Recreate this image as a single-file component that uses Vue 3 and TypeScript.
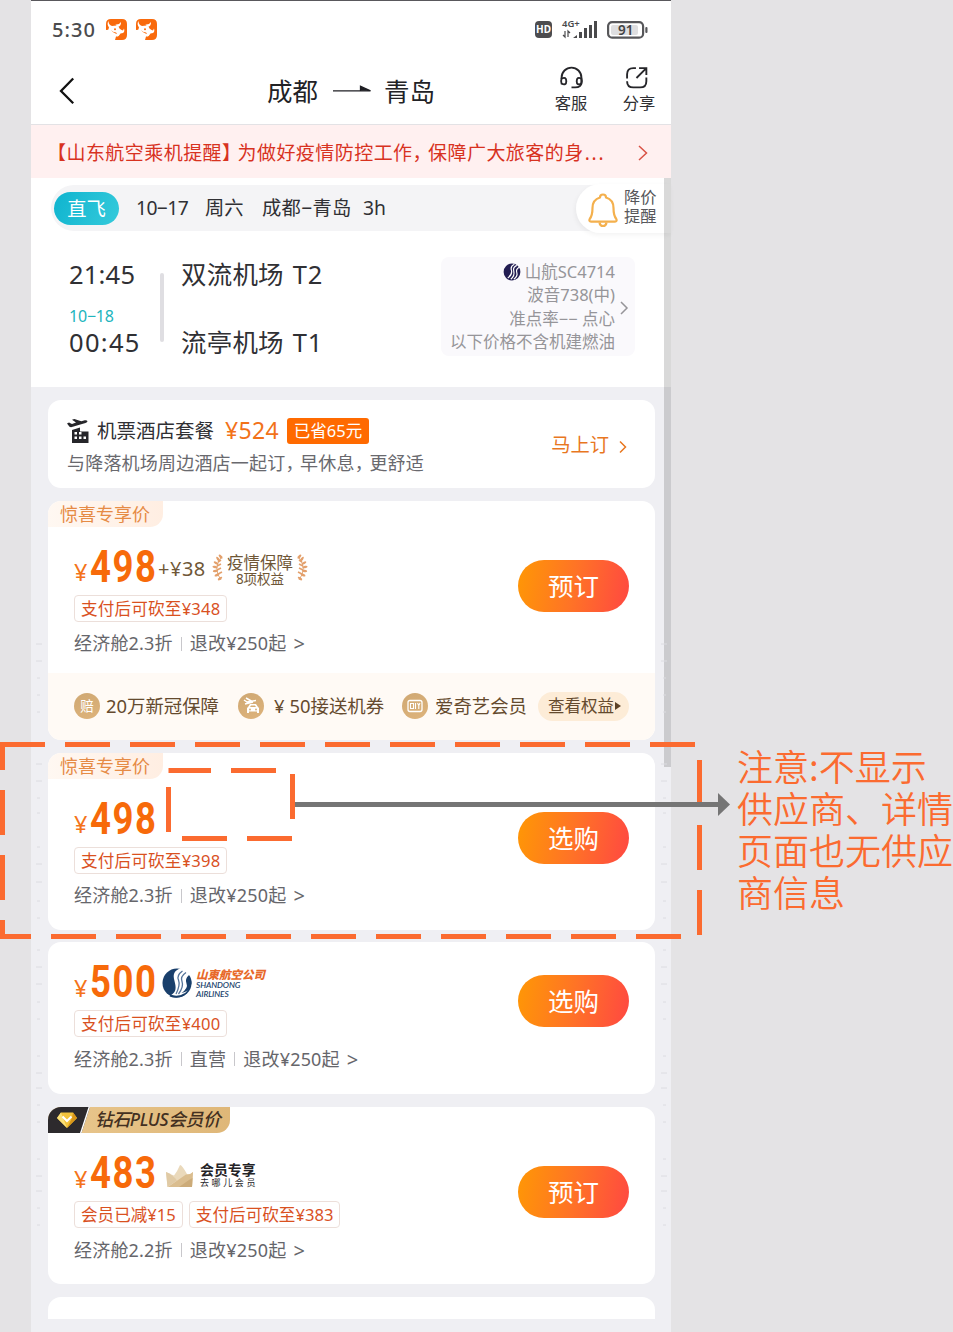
<script setup lang="ts">
interface Offer {
  id: number
  badge?: 'special' | 'plus'
  price: string
  extra?: 'benefit' | 'airline' | 'member'
  tags: string[]
  details: string[]
  action: string
  benefits?: boolean
}

const offers: Offer[] = [
  { id: 1, badge: 'special', price: '498', extra: 'benefit', tags: ['支付后可砍至¥348'], details: ['经济舱2.3折', '退改¥250起'], action: '预订', benefits: true },
  { id: 2, badge: 'special', price: '498', tags: ['支付后可砍至¥398'], details: ['经济舱2.3折', '退改¥250起'], action: '选购' },
  { id: 3, price: '500', extra: 'airline', tags: ['支付后可砍至¥400'], details: ['经济舱2.3折', '直营', '退改¥250起'], action: '选购' },
  { id: 4, badge: 'plus', price: '483', extra: 'member', tags: ['会员已减¥15', '支付后可砍至¥383'], details: ['经济舱2.2折', '退改¥250起'], action: '预订' },
]

const leafRows: { x: number; y: number; r: number }[] = [
  { x: 8.6, y: 2.6, r: -62 }, { x: 6, y: 5, r: -55 }, { x: 4, y: 9, r: -80 }, { x: 3, y: 13, r: -100 },
  { x: 3.4, y: 17, r: -115 }, { x: 5, y: 21, r: -130 }, { x: 8, y: 24.6, r: -145 },
]

const tickRows = [
  644, 661, 678, 695, 712, 764, 781, 798, 813, 847, 864, 882, 901, 918, 950, 967, 984, 1002, 1019,
  1056, 1073, 1088, 1105, 1122, 1159, 1176, 1191, 1208, 1225,
]
</script>

<template>
  <div class="page">
    <div class="phone">
      <div class="status">
        <span class="clock">5:30</span>
        <svg v-for="n in 2" :key="n" class="app-ic" viewBox="0 0 21 21">
          <path d="M5 0h11q5 0 5 5v11q0 5-5 5H9l1-3.500q4-1.500 3.500-3.500-2 1-4 .5Q6 13 5 10.500L0 11V5q0-5 5-5z" fill="#f96a0c" />
          <path d="M2.500 2Q2.500 6 6 7l4.500-.6Q13 7 13.500 9.500q1.500 1.500 3.500 2l1-2q1 3-1 4.500l-2.500.5Q13 17.500 10.500 18 12 15 10 13.500 6.500 13 5 11L2 11.500 3 8.500Q.5 5 2.500 2z" fill="#fff" />
          <path d="M9.500 5.500Q13 6 15 3q.2 4.500-3.500 5z" fill="#fff" />
          <circle cx="9" cy="10.300" r="1" fill="#f96a0c" />
        </svg>
        <span class="grow"></span>
        <span class="hd">HD</span>
        <svg class="signal" viewBox="0 0 36 22">
          <text x="0" y="8.3" font-size="9.5" font-weight="600" fill="#4a4a4c" font-family="Noto Sans">4G+</text>
          <path d="M3 12v6l-2-2M6 18v-6l2 2" fill="none" stroke="#4a4a4c" stroke-width="1.2" />
          <path d="M11 19l4-3v3zM17 13h3v6h-3zM22 9h3v10h-3zM27 6h3v13h-3zM32 2h3v17h-3z" fill="#4a4a4c" />
        </svg>
        <svg class="battery" viewBox="0 0 41 18">
          <rect x="1.1" y="1.1" width="35" height="15.6" rx="4" fill="#fff" stroke="#57575a" stroke-width="2.2" />
          <rect x="4" y="4" width="27" height="10" rx="2" fill="#dedee0" />
          <rect x="38.3" y="6" width="2.2" height="6" rx="1" fill="#57575a" />
          <text x="11" y="14" font-size="13.5" font-weight="600" fill="#444" font-family="Noto Sans">91</text>
        </svg>
      </div>

      <header class="nav">
        <svg class="back" viewBox="0 0 16 28"><path d="M14.2 1.5 2 14l12.2 12.2" fill="none" stroke="#111" stroke-width="2.3" /></svg>
        <h1 class="route">
          <span>成都</span>
          <svg class="route-arrow" viewBox="0 0 38 10"><path d="M0 5.8h37.5L27.5 1.2v4.6z" fill="#1f1f24" stroke="#1f1f24" stroke-width="1.3" /></svg>
          <span>青岛</span>
        </h1>
        <div class="tool">
          <svg viewBox="0 0 24 23">
            <g fill="none" stroke="#26262a" stroke-width="1.8">
              <path d="M2.500 12.500V11a9.500 9.500 0 0 1 19 0v4.500q0 5-6 5H12" />
              <path d="M2.500 12q4.500-2 4.500 2.500T2.500 17q-1-2.500 0-5zM21.500 12q-4.500-2-4.500 2.500t4.500 2.500q1-2.500 0-5z" />
            </g>
          </svg>
          <span>客服</span>
        </div>
        <div class="tool share">
          <svg viewBox="0 0 24 23">
            <g fill="none" stroke="#26262a" stroke-width="1.8">
              <path d="M10.500 2H8q-6 0-6 6v6.500q0 6 6 6h6.500q6 0 6-6V11" stroke-dasharray="16 2.500 40" /><path d="M11 11.500 20 2.500M13.500 2h7v6.500" />
            </g>
          </svg>
          <span>分享</span>
        </div>
      </header>

      <div class="notice">
        <p>【山东航空乘机提醒<i class="half close">】</i>为做好疫情防控工作<i class="half">，</i>保障广大旅客的身<span class="dots">...</span></p>
        <svg viewBox="0 0 10 16"><path d="M1 1l7.500 7L1 15" fill="none" stroke="#d95245" stroke-width="1.500" /></svg>
      </div>

      <section class="flight">
        <div class="date-bar">
          <span class="pill">直飞</span>
          <span class="d1">10−17</span><span class="d2">周六</span><span class="d3">成都−青岛</span><span>3h</span>
          <div class="alert">
            <svg viewBox="0 0 30 35">
              <g fill="none" stroke="#f4b04d" stroke-width="2.2" stroke-linejoin="round">
                <path d="M12 4.500a3 3 0 0 1 6 0c5 1.500 7.500 5.500 7.500 10.500 0 6 .8 8.500 2.800 11 .8 1.400.2 2.600-1.300 2.600H3c-1.500 0-2.100-1.200-1.300-2.600 2-2.500 2.800-5 2.800-11C4.500 10 7 6 12 4.500z" />
                <path d="M11.500 29.500q.5 3.500 3.500 3.500t3.500-3.500" />
              </g>
            </svg>
            <span>降价<br />提醒</span>
          </div>
        </div>
        <div class="schedule">
          <div class="times">
            <time>21:45</time>
            <span class="next-day">10−18</span>
            <time class="arr">00:45</time>
          </div>
          <i class="rail"></i>
          <div class="airports"><span>双流机场<b>T2</b></span><span>流亭机场<b>T1</b></span></div>
          <div class="plane">
            <p>
              <svg class="mini-logo" viewBox="0 0 30 30"><circle cx="15" cy="15" r="14" fill="#221d52" /><g fill="none" stroke="#fff" stroke-width="2"><path d="M19 2q-7 3-5 10t-6 13" /><path d="M23 4q-7 3-5 10t-5 13" /><path d="M27 7q-6 3-4 9t-5 11" /></g></svg>山航SC4714
            </p>
            <p>波音738(中)</p>
            <p>准点率−− 点心</p>
            <p>以下价格不含机建燃油</p>
            <svg class="plane-more" viewBox="0 0 8 14"><path d="M1 1l6 6-6 6" fill="none" stroke="#969599" stroke-width="1.500" /></svg>
          </div>
        </div>
      </section>

      <main class="list">
        <section class="card package">
          <div>
            <div class="pk-title">
              <svg class="hotel" viewBox="0 0 23 24">
                <path d="M0 4.500l2-1 3 1.500 4-1.600L5 .8 7.300 0l7 2.200 3.500-.9q2.300-.2 2.700 1-.2 1.200-2 1.600L4 8.200 2.500 7.800z" fill="#26262a" />
                <path d="M5 11l8-2.500v4h8.500V24H5z" fill="#26262a" />
                <path d="M7.500 13h2.500v2.500H7.500zM12 13h2.500v2.500H12zM7.500 17.500h2.500V20H7.500zM12 17.500h2.500V20H12zM16.500 17.500h2.500V20h-2.500z" fill="#fff" />
              </svg>
              <strong>机票酒店套餐</strong><em>¥524</em><span class="saved">已省65元</span>
            </div>
            <p>与降落机场周边酒店一起订<i class="half">，</i>早休息<i class="half">，</i>更舒适</p>
          </div>
          <a class="order-now">马上订<svg viewBox="0 0 8 14"><path d="M1 1.500l5.500 5.500L1 12.500" fill="none" stroke="#e8771f" stroke-width="1.500" /></svg></a>
        </section>

        <section v-for="o in offers" :key="o.id" class="card offer" :class="{ plain: !o.badge }">
          <div v-if="o.badge === 'special'" class="special">惊喜专享价</div>
          <div v-else-if="o.badge === 'plus'" class="plus">
            <svg class="plus-ic" viewBox="0 0 42 26">
              <path d="M0 0h42L33.500 26H0z" fill="#2d2a2d" /><path d="M40.500 0h1.500L33.500 26H32z" fill="#fff" />
              <path d="M13 5.500h12l4 5.500-10 10L9 11z" fill="#f3c33c" /><path d="M13 5.500 9 11l10 10-4-10z" fill="#fbe078" /><path d="M25 5.500 29 11 19 21l5-10z" fill="#d99618" />
              <path d="M14.500 9.500 19 14l4.500-4.500" fill="none" stroke="#fff" stroke-width="2" />
            </svg>
            <span>钻石PLUS会员价</span>
          </div>

          <div class="body">
            <div class="info">
              <div class="price">
                <span class="yen">¥</span><span class="num">{{ o.price }}</span>
                <template v-if="o.extra === 'benefit'">
                  <span class="add">+¥38</span>
                  <svg class="laurel" viewBox="0 0 12 28"><path d="M10 2Q0 14 9 26" fill="none" stroke="#e3ac7d" stroke-width="1" /><ellipse v-for="(l, i) in leafRows" :key="i" :cx="l.x" :cy="l.y" rx="2.600" ry="1.200" fill="#e3a06c" :transform="`rotate(${l.r + 110} ${l.x} ${l.y})`" /><path d="M6 8l3-2M5 12l4-2M5 16l4-2M6 20l4-2" stroke="#e3a06c" stroke-width="1.600" /></svg>
                  <span class="guard"><b>疫情保障</b><small>8项权益</small></span>
                  <svg class="laurel flip" viewBox="0 0 12 28"><path d="M10 2Q0 14 9 26" fill="none" stroke="#e3ac7d" stroke-width="1" /><ellipse v-for="(l, i) in leafRows" :key="i" :cx="l.x" :cy="l.y" rx="2.600" ry="1.200" fill="#e3a06c" :transform="`rotate(${l.r + 110} ${l.x} ${l.y})`" /><path d="M6 8l3-2M5 12l4-2M5 16l4-2M6 20l4-2" stroke="#e3a06c" stroke-width="1.600" /></svg>
                </template>
                <template v-else-if="o.extra === 'airline'">
                  <svg class="sd-logo" viewBox="0 0 30 30">
                    <circle cx="15" cy="15" r="14.500" fill="#193f6b" />
                    <path d="M19 0C11 3 11 7 12.500 13S15 24 8.500 27.500q8 1.500 13-1Q28 21 28 15l2-3V0z" fill="#fff" />
                    <g fill="none" stroke="#55749a" stroke-width="1.300"><path d="M20.500 3q-6 4-4 9t-2.500 14" /><path d="M24 4.500q-6 4-4 9t-3.500 12.500" /></g>
                    <path d="M27 7q-4.500 4-2.500 8.500T19.500 25q9-2 10-9.500.3-5-2.500-8.500z" fill="#193f6b" />
                    <path d="M8 27.500q8 3 15-1.500" fill="none" stroke="#193f6b" stroke-width="2" />
                  </svg>
                  <span class="airline"><b>山東航空公司</b><i>SHANDONG<br />AIRLINES</i></span>
                </template>
                <template v-else-if="o.extra === 'member'">
                  <svg class="crown" viewBox="0 0 28 24">
                    <path d="M0 8q4 2 8 3.500Q11 8 14 1q2 0 7 9 3 1 6-2l-1 15H1.500z" fill="#ead9bb" /><path d="M2 23 20 10.500q4 .5 7-2.500l-1 15z" fill="#dabd8f" /><path d="M0 8q6 2 11 8.500L1.500 23z" fill="#e0caa5" /><path d="M13 23 23 16l3.500-2-.5 9z" fill="#ccab79" />
                  </svg>
                  <span class="member"><b>会员专享</b><small>去哪儿会员</small></span>
                </template>
              </div>
              <div class="tags"><span v-for="t in o.tags" :key="t">{{ t }}</span></div>
              <div class="detail"><span v-for="d in o.details" :key="d">{{ d }}</span><em>&gt;</em></div>
            </div>
            <button class="buy">{{ o.action }}</button>
          </div>

          <div v-if="o.benefits" class="benefits">
            <span class="coin">赔</span><span class="b1">20万新冠保障</span>
            <span class="coin">
              <svg viewBox="0 0 26 26"><path d="M6 7l3 2 9-1.500M8 5l7 4M7 11l8-2" stroke="#fff" stroke-width="1.500" fill="none" /><path d="M10 14l2-3h6l2 3 1 1v5h-2v-1.500h-8V20H9v-5z" fill="#fff" /><path d="M12 14h6l-1-1.600h-4z" fill="#d6ac73" /><circle cx="12" cy="16.500" r=".9" fill="#d6ac73" /><circle cx="18" cy="16.500" r=".9" fill="#d6ac73" /></svg>
            </span>
            <span class="b2"><i>¥</i>50接送机券</span>
            <span class="coin">
              <svg viewBox="0 0 26 26"><rect x="6" y="7.500" width="14" height="11" rx="2" fill="none" stroke="#fff" stroke-width="1.300" /><path d="M8.500 10.500h3v5h-3zM13.500 10v6M15.500 10l1.300 2.500L18 10M16.800 12.500V16" fill="none" stroke="#fff" stroke-width="1.100" /></svg>
            </span>
            <span class="b3">爱奇艺会员</span>
            <span class="rights">查看权益<svg viewBox="0 0 6 8"><path d="M0 0l6 4-6 4z" fill="#5d4226" /></svg></span>
          </div>
        </section>
        <section class="card next"></section>
      </main>
      <i class="scrollbar"></i>
    </div>

    <p class="remark">注意:不显示<br />供应商、详情页面也无供应商信息</p>

    <svg class="marks" viewBox="0 0 953 1332">
      <g stroke="#dcdce1" stroke-width="1">
        <path v-for="(y, i) in tickRows" :key="y" :d="i % 5 < 2 ? `M36 ${y}h6M661 ${y}h6` : `M37 ${y}h3M663 ${y}h3`" />
      </g>
      <g fill="none" stroke="#fb6b30" stroke-width="5" stroke-dasharray="45 20">
        <path d="M0 744.500H695" />
        <path d="M699.500 760V935" />
        <path d="M2.500 742V939" stroke-dashoffset="17" />
        <path d="M0 936.500H681" stroke-dashoffset="14" />
        <path d="M168.500 770.500H276" stroke-dashoffset="2.500" />
        <path d="M292.500 774V819" /><path d="M168.500 787V832" /><path d="M182 838.500H292" />
      </g>
      <path d="M295 804.500H719" stroke="#757575" stroke-width="5" /><path d="M718 793v23l12-11.500z" fill="#757575" />
    </svg>
  </div>
</template>

<style>
body { margin: 0; background: #e4e3e5; }
</style>

<style scoped>
* { box-sizing: border-box; }
.page { position: relative; width: 953px; height: 1332px; overflow: hidden; display: flex; background: #e4e3e5; font-family: "Noto Sans", "Noto Sans CJK SC", sans-serif; color: #303034; }
p, h1 { margin: 0; font-weight: 400; }
i, em { font-style: normal; }
svg { display: block; flex: none; overflow: visible; }
.phone { position: relative; flex: none; width: 640px; height: 1332px; margin-left: 31px; background: #efeff3; border-top: 1px solid #59585c; }
.grow { flex: 1; }
.status { display: flex; align-items: center; height: 57px; padding: 0 23px 0 21px; background: #fff; }
.clock { width: 54px; font-size: 20px; font-weight: 500; line-height: 28px; letter-spacing: 1.1px; color: #4b4b4d; }
.app-ic { width: 21px; height: 21px; margin-right: 9px; }
.hd { width: 17px; height: 17px; margin-right: 10px; border-radius: 4px; background: #4c4c4f; color: #fff; font: 700 10px/17px "Noto Sans", sans-serif; text-align: center; }
.signal { width: 36px; height: 22px; margin-right: 9px; }
.battery { width: 41px; height: 18px; }
.nav { display: flex; height: 67px; padding-left: 28px; background: #fff; border-bottom: 1px solid #e3e2e5; }
.back { width: 16px; height: 28px; margin-top: 19px; }
.route { display: flex; align-items: center; width: 169px; height: 34px; margin: 16px 0 0 192px; font-size: 25.500px; line-height: 34px; color: #222226; }
.route-arrow { width: 38px; height: 10px; margin: 0 13px 2px 15px; }
.tool { display: flex; flex-direction: column; align-items: center; width: 34px; margin: 8px 0 0 118px; font-size: 16.300px; line-height: 22px; }
.tool svg { width: 25px; height: 24px; margin-bottom: 2px; }
.share { margin-left: 34px; }
.share svg { margin-right: 4px; }
.notice { display: flex; align-items: center; height: 53px; padding: 2px 23px 0 16px; background: #fff0f0; color: #d8321f; }
.notice p { flex: 1; font-size: 19px; letter-spacing: .45px; line-height: 28px; white-space: nowrap; }
.notice svg { width: 10px; height: 16px; }
.half { font-family: "Noto Sans CJK SC", sans-serif; font-feature-settings: "halt"; line-height: 1; margin-right: 5.500px; }
.dots { letter-spacing: 1.800px; margin-left: 1px; }
.flight { height: 209px; padding-top: 7px; background: #fff; }
.date-bar { display: flex; align-items: center; height: 46px; margin-left: 20px; padding-left: 3px; border-radius: 23px 0 0 23px; background: #f4f4f6; font-size: 19.300px; line-height: 28px; }
.date-bar > span { white-space: nowrap; }
.pill { width: 65px; height: 33px; margin-right: 17px; border-radius: 17px; background: linear-gradient(115deg, #0fb4cf, #35cadb); color: #fff; text-align: center; line-height: 33px; }
.d1 { width: 69px; letter-spacing: -.6px; }
.d2 { width: 57px; }
.d3 { width: 101px; letter-spacing: .3px; }
.alert { display: flex; align-items: center; width: 95px; height: 49px; margin-left: auto; padding-left: 12px; border-radius: 25px 0 0 25px; background: #fff; box-shadow: -1px 2px 5px #0000000d; font-size: 16.300px; line-height: 19.500px; color: #57575b; }
.alert svg { width: 30px; height: 35px; margin: 4px 6px 0 0; }
.alert span { margin-top: -2px; }
.schedule { display: flex; padding-left: 38px; }
.times { display: flex; flex-direction: column; width: 91px; margin-top: 26px; font-size: 25.500px; line-height: 34px; letter-spacing: .2px; }
.arr { letter-spacing: 1.300px; }
.next-day { margin-top: 15px; height: 19px; font-size: 16px; line-height: 20px; letter-spacing: -.2px; color: #21b5bd; }
.rail { width: 4px; height: 69px; margin-top: 42px; background: #dfdee2; border-radius: 2px; }
.airports { display: flex; flex-direction: column; gap: 34px; width: 260px; margin: 26px 0 0 17px; font-size: 25.500px; line-height: 34px; letter-spacing: .2px; }
.airports b { margin-left: 9px; font-weight: 400; letter-spacing: .8px; }
.plane { position: relative; width: 194px; height: 99px; margin-top: 26px; padding: 3px 20px 0 0; border-radius: 8px; background: #faf9fc; font-size: 16.500px; line-height: 23.300px; text-align: right; color: #969599; }
.plane p { display: flex; justify-content: flex-end; align-items: center; white-space: nowrap; height: 23.300px; }
.mini-logo { width: 18px; height: 18px; margin-right: 4px; }
.plane-more { position: absolute; right: 7px; top: 44px; width: 8px; height: 14px; }
.list { display: flex; flex-direction: column; gap: 12.750px; padding: 13px 16px 0 17px; }
.card { width: 607px; border-radius: 13px; background: #fff; overflow: hidden; }
.package { display: flex; height: 88px; padding: 17px 26px 0 19px; justify-content: space-between; }
.pk-title { display: flex; align-items: center; height: 27px; }
.hotel { width: 23px; height: 24px; margin-right: 7px; }
.pk-title strong { font-weight: 400; font-size: 19.500px; line-height: 27px; }
.pk-title em { margin-left: 11px; width: 62px; font-size: 23px; line-height: 27px; letter-spacing: .3px; color: #f27219; }
.saved { width: 82px; height: 26px; border-radius: 3px; background: #ff6a00; color: #fff; font-size: 16.500px; line-height: 26px; text-align: center; }
.package p { margin-top: 7px; font-size: 18px; line-height: 24px; letter-spacing: .2px; color: #69696e; }
.order-now { display: flex; align-items: center; height: 26px; margin-top: 15px; font-size: 19.300px; color: #e8771f; line-height: 26px; }
.order-now svg { width: 8px; height: 14px; margin: 4px 2px 0 10px; }
.special { width: 115px; height: 26px; padding-left: 12px; border-radius: 0 0 13px 0; background: linear-gradient(90deg, #fff8f2, #ffeee2); color: #e68b45; font-size: 18px; line-height: 26px; }
.plus { display: flex; width: 182px; height: 26px; border-radius: 0 0 13px 0; background: linear-gradient(90deg, #e9c78e, #dfb778); overflow: hidden; }
.plus-ic { width: 42px; height: 26px; }
.plus span { margin-left: 5px; font-size: 17.800px; line-height: 25px; font-style: italic; font-weight: 500; letter-spacing: -.4px; color: #433021; white-space: nowrap; }
.body { display: flex; justify-content: space-between; padding: 0 26px 23px; }
.price { display: flex; align-items: center; height: 40px; margin-top: 21px; white-space: nowrap; }
.yen { width: 16px; margin-top: 9px; font-size: 23.500px; line-height: 32px; color: #f4731a; }
.num { width: 68px; font: 700 43.500px/40px Roboto, sans-serif; letter-spacing: 1.800px; color: #f76a0a; transform: scaleX(.84); transform-origin: left; }
.add { width: 54px; margin-top: 3px; font-size: 20px; line-height: 28px; color: #6f5737; letter-spacing: .5px; }
.laurel { width: 12px; height: 28px; margin-top: 1px; }
.flip { transform: scaleX(-1); }
.guard { display: flex; flex-direction: column; width: 70px; align-items: center; margin: 4px 1px 0; color: #6f5737; }
.guard b { font-size: 16.500px; font-weight: 400; line-height: 18px; }
.guard small { font-size: 13.500px; line-height: 14px; }
.sd-logo { width: 30px; height: 30px; margin-left: 4px; }
.airline { display: flex; flex-direction: column; margin-left: 4px; font-style: italic; }
.airline b { font-size: 11.500px; line-height: 13px; font-weight: 900; color: #e8692a; }
.airline i { font: italic 600 8.300px/8.500px Lato, sans-serif; letter-spacing: -.1px; color: #193f6b; }
.crown { width: 28px; height: 24px; margin: 3px 0 0 8px; }
.member { display: flex; flex-direction: column; margin: 1px 0 0 6px; color: #232326; }
.member b { font-size: 13.900px; line-height: 15px; font-weight: 700; }
.member small { margin-top: 0; font-size: 9px; line-height: 11px; letter-spacing: 2.600px; }
.tags { display: flex; gap: 6px; margin-top: 7px; }
.tags span { height: 27px; padding: 0 6px; border: 1px solid #ecdfda; border-radius: 4px; font-size: 16.600px; line-height: 26px; color: #d9511f; white-space: nowrap; }
.tags span:only-child { letter-spacing: .18px; }
.detail { display: flex; align-items: center; height: 22px; margin-top: 11px; font-size: 18px; line-height: 21px; letter-spacing: .2px; color: #66666b; }
.detail span + span { display: flex; align-items: center; }
.detail span + span::before { content: ""; width: 1px; height: 14px; margin: 0 8px; background: #c8c7cb; }
.detail em { margin-left: 7px; font-size: 20px; }
.buy { width: 111px; height: 52px; margin-top: 33px; padding: 0 0 2px; border: 0; border-radius: 26px; background: linear-gradient(100deg, #ff9408 5%, #ff7326 50%, #ff4c3f 95%); color: #fff; font: 400 25.500px/52px "Noto Sans", "Noto Sans CJK SC", sans-serif; }
.body:not(:last-child) { padding-bottom: 18px; }
.benefits { display: flex; align-items: center; height: 67px; padding-left: 26px; background: #fffaf5; font-size: 18.400px; line-height: 26px; color: #654a2e; white-space: nowrap; }
.coin { width: 26px; height: 26px; flex: none; border-radius: 50%; background: linear-gradient(160deg, #cfa873, #deb37b); color: #fff; font-size: 13.500px; text-align: center; }
.b1 { width: 138px; padding-left: 6px; }
.b2 { width: 138px; padding-left: 10px; }
.b2 i { margin-right: 5px; }
.b3 { width: 110px; padding-left: 7px; }
.rights { display: flex; align-items: center; width: 91px; height: 29px; padding-left: 10px; border-radius: 15px; background: #fdecd7; font-size: 16.500px; }
.rights svg { width: 6px; height: 8px; margin-left: 1px; }
.plain .body { padding-bottom: 24px; }
.next { height: 22px; border-radius: 13px 13px 0 0; }
.scrollbar { position: absolute; right: 0; top: 177px; width: 7px; height: 589px; background: #00000026; }
.remark { width: 220px; margin: 744px 0 0 66px; flex: none; font: 350 36px/42px "Noto Sans CJK SC", sans-serif; color: #fb6b30; }
.marks { position: absolute; left: 0; top: 0; width: 953px; height: 1332px; }
</style>
